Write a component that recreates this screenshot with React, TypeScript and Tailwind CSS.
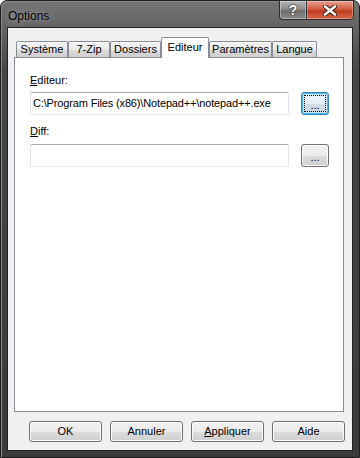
import React from "react";

const font = "font-['Liberation_Sans',Arial,sans-serif]";

function WinButton({ label, width, focused }: { label: React.ReactNode; width: string; focused?: boolean }) {
    return (
        <button
            type="button"
            className={`${width} h-[21px] rounded-[3px] border text-[11px] leading-[13px] text-black flex items-center justify-center bg-[linear-gradient(180deg,#f2f2f2_0%,#ebebeb_50%,#dddddd_50%,#cfcfcf_100%)] ${
                focused
                    ? "border-[#3c7fb1] shadow-[inset_0_0_0_1px_#48b9eb,inset_0_0_0_2px_#c4e6f6] bg-[linear-gradient(180deg,#edf5fa_0%,#e3eef5_50%,#d3dfe7_50%,#c8d5de_100%)]"
                    : "border-[#707070] shadow-[inset_0_0_0_1px_#fbfbfb]"
            }`}
        >
            {label}
        </button>
    );
}

function SmallButton({ focused }: { focused?: boolean }) {
    return (
        <button
            type="button"
            className={`relative w-[28px] h-[23px] rounded-[3px] border text-[11px] text-black flex items-center justify-center ${
                focused
                    ? "border-[#3c7fb1] shadow-[inset_0_0_0_1px_#48b9eb,inset_0_0_0_2px_#c4e6f6] bg-[linear-gradient(180deg,#edf5fa_0%,#e3eef5_50%,#d3dfe7_50%,#c8d5de_100%)]"
                    : "border-[#707070] shadow-[inset_0_0_0_1px_#fbfbfb] bg-[linear-gradient(180deg,#f2f2f2_0%,#ebebeb_50%,#dddddd_50%,#cfcfcf_100%)]"
            }`}
        >
            {focused && <span className="absolute inset-[2px] border border-dotted border-black" />}
            <span className="pt-[3px]">...</span>
        </button>
    );
}

const tabs = [
    { name: "Système", w: "w-[52px]" },
    { name: "7-Zip", w: "w-[42px]" },
    { name: "Dossiers", w: "w-[51px]" },
    { name: "Editeur", w: "w-[48px]", active: true },
    { name: "Paramètres", w: "w-[63px]" },
    { name: "Langue", w: "w-[45px]" },
];

export default function App() {
    return (
        <div className={`w-[360px] h-[458px] ${font} text-black`}>
            <div className="h-full flex flex-col rounded-t-[7px] border border-[#1c1c1c] bg-[linear-gradient(180deg,#747474_0px,#646464_26px,#454545_70px,#3a3a3a_100%)] shadow-[inset_1px_1px_0_#8a8a8a]">
                {/* title bar */}
                <div className="h-[26px] flex shrink-0">
                    <span className="pl-[7px] pt-[8px] text-[12px] leading-[14px] text-black [text-shadow:0_0_6px_rgba(255,255,255,0.55)]">
                        Options
                    </span>
                    <div className="ml-auto mr-[5px] flex self-start -mt-px">
                        <div className="w-[27px] h-[20px] rounded-bl-[4px] border border-[#2e2e2e] border-r-0 bg-[linear-gradient(180deg,#b4b4b4_0%,#8e8e8e_45%,#6c6c6c_55%,#8c8c8c_100%)] shadow-[inset_0_0_0_1px_rgba(255,255,255,0.35)] flex items-center justify-center">
                            <span className="text-white font-bold text-[14px] leading-[14px] [text-shadow:0_0_2px_#222,0_0_1px_#000]">?</span>
                        </div>
                        <div className="w-[48px] h-[20px] rounded-br-[4px] border border-[#2e2e2e] bg-[linear-gradient(180deg,#e6a290_0%,#d45c40_45%,#be3a1e_55%,#d8694b_100%)] shadow-[inset_0_0_0_1px_rgba(255,255,255,0.3)] flex items-center justify-center">
                            <svg width="14" height="11" viewBox="0 0 14 11">
                                <path d="M2 1.5 L12 9.5 M12 1.5 L2 9.5" stroke="#3a1a12" strokeWidth="4.5" strokeLinecap="round" />
                                <path d="M2 1.5 L12 9.5 M12 1.5 L2 9.5" stroke="#ffffff" strokeWidth="2.6" strokeLinecap="round" />
                            </svg>
                        </div>
                    </div>
                </div>

                {/* client area */}
                <div className="flex-1 mx-[6px] mb-[6px] border border-[#222] bg-[#f0f0f0] flex flex-col pt-[9px] pb-[8px]">
                    <div className="ml-[6px] mr-[8px] flex-1 flex flex-col">
                        <div className="h-[20px] flex items-end pl-[2px]">
                            {tabs.map((t) =>
                                t.active ? (
                                    <div
                                        key={t.name}
                                        className={`${t.w} h-[21px] -mb-px relative z-10 border border-b-0 border-[#898c95] bg-white text-[11px] leading-[16px] pt-[1px] text-center rounded-t-[2px]`}
                                    >
                                        {t.name}
                                    </div>
                                ) : (
                                    <div
                                        key={t.name}
                                        className={`${t.w} h-[16px] border border-b-0 border-[#898c95] bg-[linear-gradient(180deg,#f2f2f2_0%,#ebebeb_50%,#dddddd_50%,#cfcfcf_100%)] shadow-[inset_0_1px_0_#fff] text-[11px] leading-[15px] text-center rounded-t-[2px]`}
                                    >
                                        {t.name}
                                    </div>
                                )
                            )}
                        </div>
                        <div className="flex-1 border border-[#898c95] bg-white pt-[15px] pl-[15px] pr-[13px]">
                            <div className="text-[11px] leading-[14px]">
                                <u>E</u>diteur:
                            </div>
                            <div className="mt-[5px] flex items-center gap-[12px]">
                                <div className="w-[259px] h-[23px] border border-[#e2e3ea] border-t-[#abadb3] border-b-[#e3e9ef] rounded-[2px] bg-white flex items-center pl-[2px] text-[11px] tracking-[-0.15px] whitespace-nowrap overflow-hidden">
                                    C:\Program Files (x86)\Notepad++\notepad++.exe
                                </div>
                                <SmallButton focused />
                            </div>
                            <div className="mt-[9px] text-[11px] leading-[14px]">
                                <u>D</u>iff:
                            </div>
                            <div className="mt-[6px] flex items-center gap-[12px]">
                                <div className="w-[259px] h-[23px] border border-[#e2e3ea] border-t-[#abadb3] border-b-[#e3e9ef] rounded-[2px] bg-white" />
                                <SmallButton />
                            </div>
                        </div>
                    </div>
                    <div className="mt-[9px] flex justify-end gap-[8px] pr-[7px]">
                        <WinButton label="OK" width="w-[73px]" />
                        <WinButton label="Annuler" width="w-[73px]" />
                        <WinButton label={<><u>A</u>ppliquer</>} width="w-[73px]" />
                        <WinButton label="Aide" width="w-[73px]" />
                    </div>
                </div>
            </div>
        </div>
    );
}
